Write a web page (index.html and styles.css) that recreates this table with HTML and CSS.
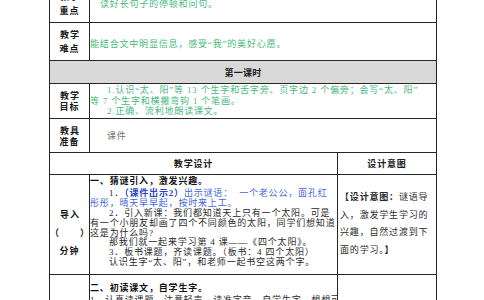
FILE: index.html
```html
<!DOCTYPE html>
<html lang="zh-CN">
<head>
<meta charset="utf-8">
<title>四个太阳 教学设计</title>
<link rel="stylesheet" href="styles.css">
</head>
<body>
<div class="page">
<table class="plan">
  <colgroup><col class="c-label"><col class="c-main"><col class="c-side"></colgroup>
  <tr class="r-key">
    <th class="label wide">教学<br>重点</th>
    <td colspan="2" class="green ind1">读好长句子的停顿和问句。</td>
  </tr>
  <tr class="r-diff">
    <th class="label wide">教学<br>难点</th>
    <td colspan="2" class="green diff">能结合文中明显信息，感受“我”的美好心愿。</td>
  </tr>
  <tr class="r-sec">
    <th colspan="3" class="section">第一课时</th>
  </tr>
  <tr class="r-goal">
    <th class="label">教学<br>目标</th>
    <td colspan="2" class="green goal">
      <p class="ind">1.认识“太、阳”等 13 个生字和舌字旁、页字边 2 个偏旁；会写“太、阳”<br>等 7 个生字和横撇弯钩 1 个笔画。</p>
      <p class="ind">2.正确、流利地朗读课文。</p>
    </td>
  </tr>
  <tr class="r-tool">
    <th class="label">教具<br>准备</th>
    <td colspan="2" class="gray ind">课件</td>
  </tr>
  <tr class="r-head">
    <th colspan="2" class="head">教学设计</th>
    <th class="head">设计意图</th>
  </tr>
  <tr class="r-intro">
    <th class="label step">导入<br>（　　）<br>分钟</th>
    <td class="main">
      <p class="title">一、猜谜引入，激发兴趣。</p>
      <p class="ind2">1．<b class="blue-b">（课件出示2）</b><span class="blue">出示谜语：&nbsp;&nbsp;一个老公公，面孔红<br>彤彤，晴天早早起，按时来上工。</span></p>
      <p class="ind2">2．引入新课：我们都知道天上只有一个太阳。可是<br>有一个小朋友却画了四个不同颜色的太阳，同学们想知道<br>这是为什么吗?</p>
      <p class="ind2">那我们就一起来学习第 4 课——《四个太阳》。</p>
      <p class="ind2">3．板书课题，齐读课题。（板书：4 四个太阳）</p>
      <p class="ind2">认识生字“太、阳”，和老师一起书空这两个字。</p>
    </td>
    <td class="side">
      <p><b>【设计意图：</b>谜语导<br>入，激发学生学习的<br>兴趣，自然过渡到下<br>面的学习。<b>】</b></p>
    </td>
  </tr>
  <tr class="r-read">
    <th class="label"></th>
    <td class="main read">
      <p class="title">二、初读课文，自学生字。</p>
      <p>1．认真读课题，注意轻声，读准字音，自学生字，想想可</p>
    </td>
    <td class="side"></td>
  </tr>
</table>
</div>
</body>
</html>
```

FILE: styles.css
```css
html, body {
  margin: 0;
  height: 300px;
  overflow: hidden;
  background: #fff;
}

body {
  font-family: "Liberation Serif", "Noto Sans CJK SC", serif;
  font-size: 9px;
  color: #2a2a2a;
}

.page {
  padding-left: 49px;
  margin-top: -16px;
}

.plan {
  border-collapse: collapse;
  table-layout: fixed;
  width: 387px;
  letter-spacing: 0.82px;
}

.c-label { width: 40px; }
.c-main { width: 248px; }
.c-side { width: 99px; }

.plan th,
.plan td {
  border: 1px solid #262626;
  padding: 0;
  vertical-align: middle;
  text-align: left;
  font-weight: normal;
  white-space: nowrap;
  overflow: hidden;
}

.plan p {
  margin: 0;
}

.r-key { height: 38px; }
.r-diff { height: 38px; }
.r-sec { height: 23px; }
.r-goal { height: 35px; }
.r-tool { height: 34px; }
.r-head { height: 22px; }
.r-intro { height: 100px; }
.r-read { height: 40px; }

.label {
  font-family: "Noto Sans CJK SC", sans-serif;
  font-weight: 700 !important;
  text-align: center !important;
  line-height: 11px;
  letter-spacing: 1px;
  text-indent: 1px;
  color: #1a1a1a;
}

.label.wide { line-height: 14px; }

.section {
  background: #d9d9d9;
  text-align: center !important;
  font-weight: 700 !important;
  letter-spacing: 0.3px;
  color: #1a1a1a;
}

.head {
  text-align: center !important;
  font-weight: 700 !important;
  color: #1a1a1a;
}

.green { color: #47b97c; }
.gray { color: #707070; }
.blue { color: #4466dd; }
.blue-b { color: #2a44d0; }

.ind1 { text-indent: 10px; }
.diff { padding-top: 3px !important; }
.ind { text-indent: 17px; }
.ind2 { text-indent: 19px; }

.goal { line-height: 10.8px; }

.main {
  vertical-align: top !important;
  line-height: 9.9px;
  padding-top: 2px !important;
}

.title {
  font-weight: 700;
  color: #111;
  margin-bottom: 2px !important;
}

.step {
  vertical-align: top !important;
  line-height: 18px;
  padding-top: 31px !important;
}

.side {
  vertical-align: top !important;
  line-height: 17.7px;
  padding: 14px 0 0 2px !important;
}

.read {
  padding-top: 9px !important;
}
```
